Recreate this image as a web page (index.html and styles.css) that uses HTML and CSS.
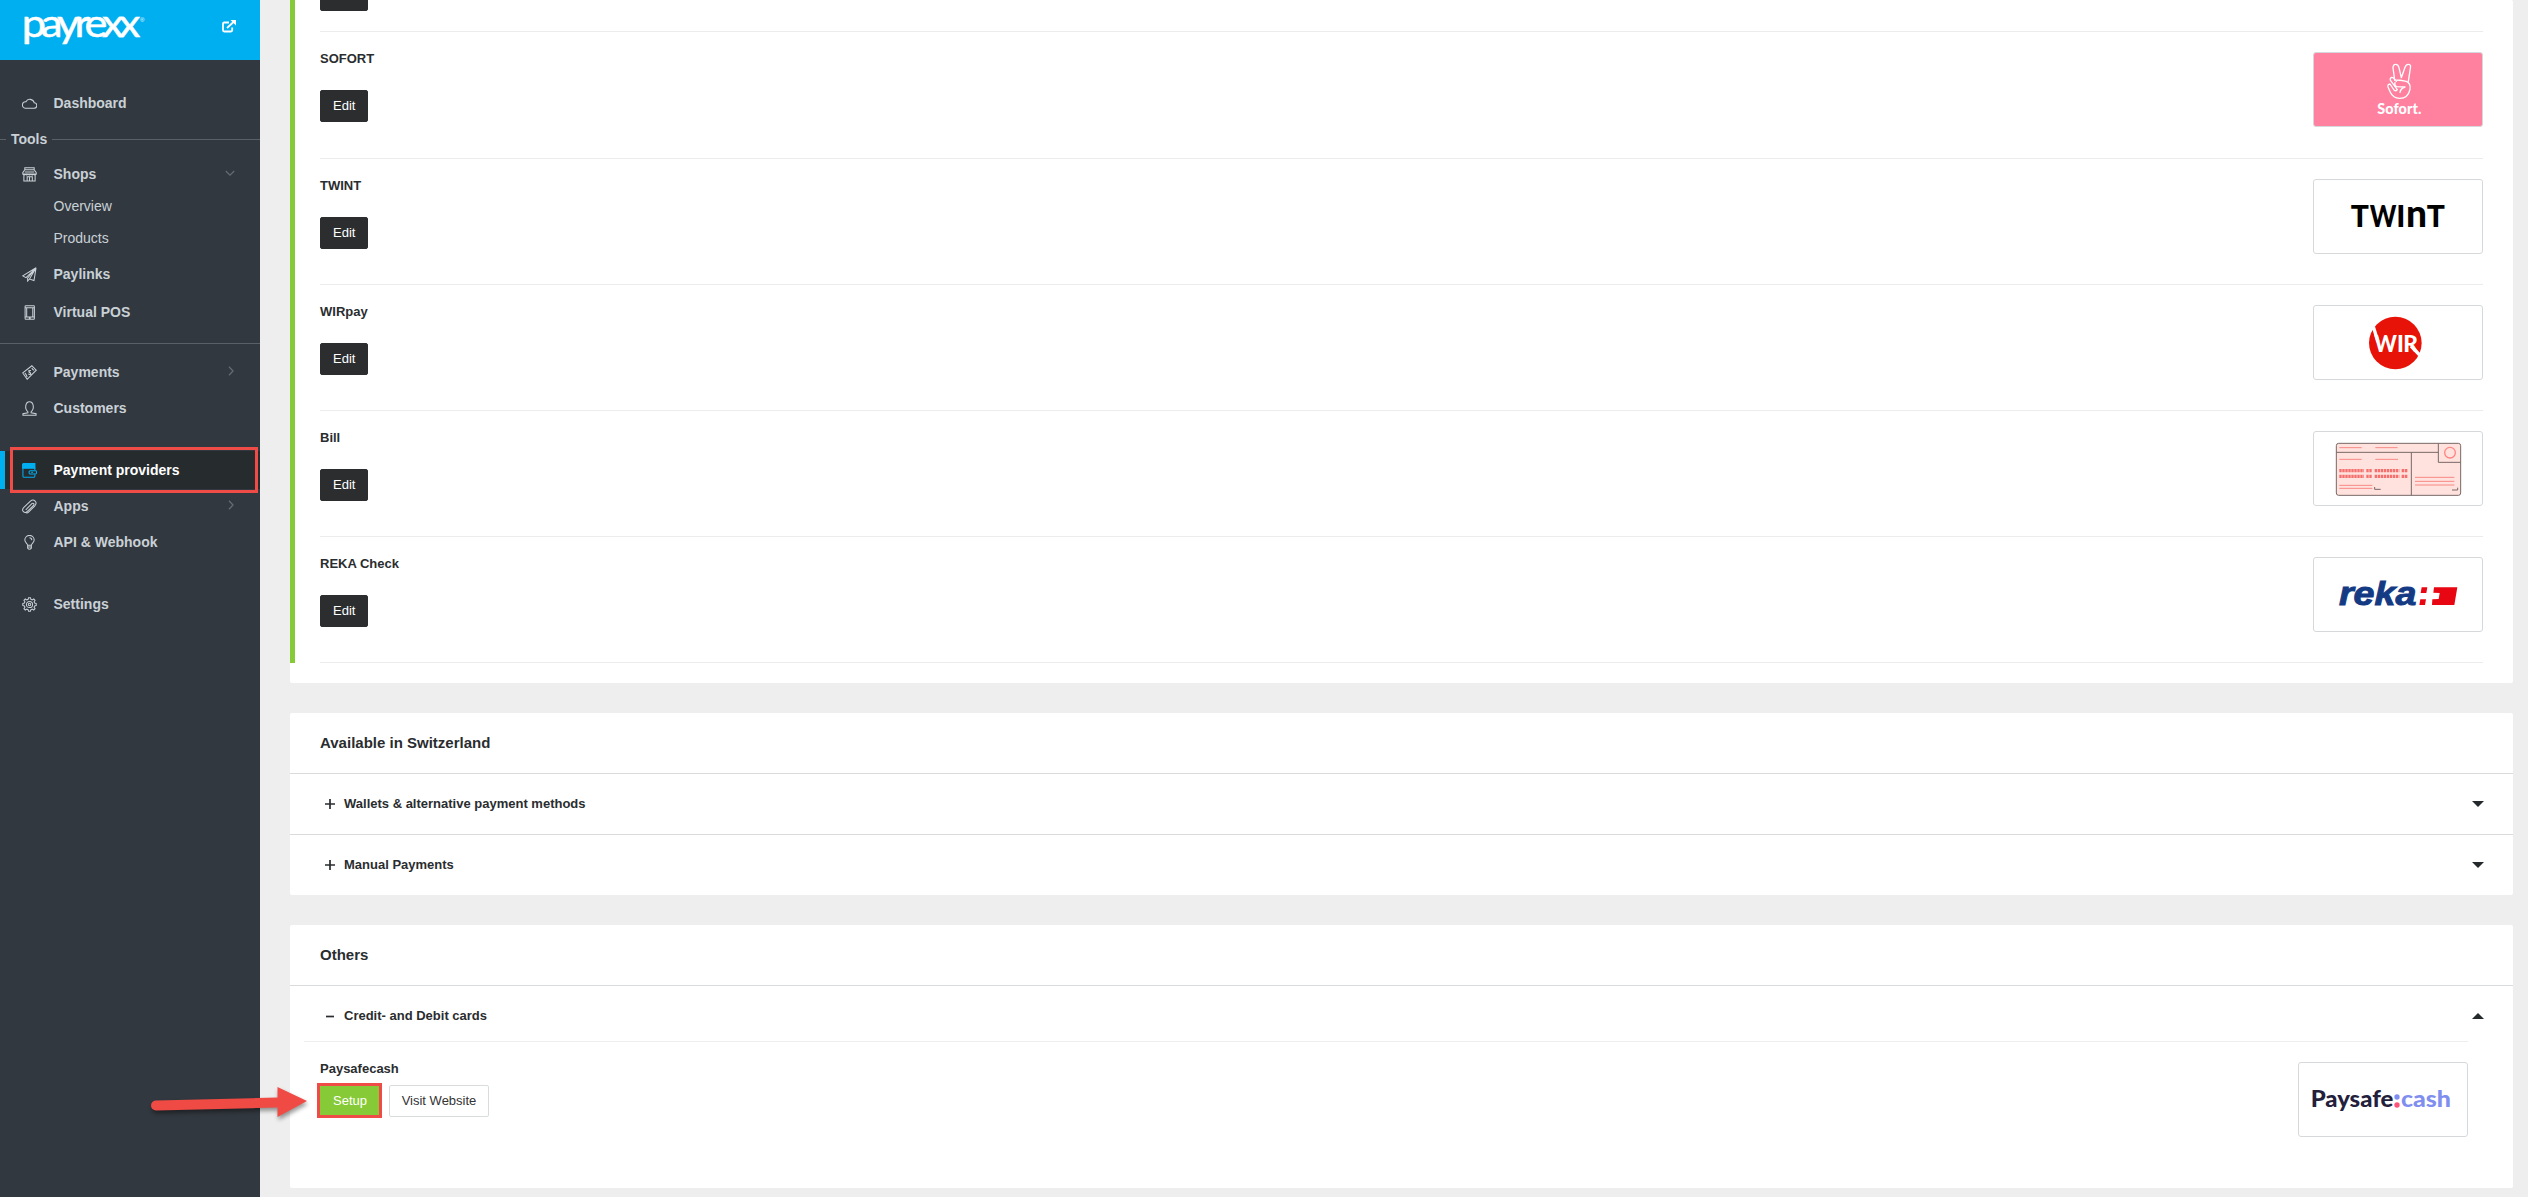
FILE: index.html
```html
<!DOCTYPE html>
<html lang="en">
  <head>
    <meta charset="UTF-8" />
    <meta name="viewport" content="width=device-width, initial-scale=1.0" />
    <title>Payrexx - Payment providers</title>
    <link rel="stylesheet" href="styles.css">
  </head>
  <body>
    <aside class="sidebar">
      <div class="brand">
        <svg class="logo" width="124" height="34" viewBox="0 0 124 34">
          <text class="logo-text" transform="scale(1.14 1)" x="-2" y="25" textLength="104">payrexx</text>
          <text class="logo-mark" x="116" y="10">®</text>
        </svg>
        <svg class="external" width="14" height="13" viewBox="0 0 14 13">
          <path d="M7 2.5H2.2Q1 2.500 1 3.700V10.300Q1 11.500 2.200 11.500H9Q10.200 11.500 10.200 10.300V7.500" />
          <path d="M5 8L11.500 2" />
          <path class="solid" d="M8.500 0H14V5.500Z" />
        </svg>
      </div>

      <nav>
        <a class="item"><svg viewBox="0 0 16 16"><path d="M3.500 13H12.800A2.900 2.900 0 0 0 13 7.200A4.700 4.700 0 0 0 4.200 6.200A3.400 3.400 0 0 0 3.500 13Z" /></svg>Dashboard</a>
        <div class="group"><span>Tools</span></div>
        <a class="item shops"><svg viewBox="0 0 16 16"><path d="M3 .8H13V3H3ZM3 3L.8 6V7.500H15.200V6L13 3M1 7.500Q2.200 9.500 3.700 7.700Q5 9.500 6.400 7.700Q8 9.500 9.500 7.700Q11 9.500 12.400 7.700Q14 9.500 15 7.500M2 9V15H14V9M5.500 15V10.500H8V15M8 10.500H11V15M3 5.300H13" /></svg>Shops
          <svg class="chevron" viewBox="0 0 10 10"><path d="M.8 3L5 7.200L9.200 3" /></svg></a>
        <a class="subitem">Overview</a>
        <a class="subitem">Products</a>
        <a class="item paylinks"><svg viewBox="0 0 16 16"><path d="M15 .8L.8 9.500L4.300 11.300L15 .8L6 12V15L8 12.800L12.800 14.500L15 .8L8 12.800" /></svg>Paylinks</a>
        <a class="item pos"><svg viewBox="0 0 16 16"><path d="M4 .8H12.500Q13.200 .8 13.200 1.600V14.400Q13.200 15.200 12.500 15.200H4Q3.300 15.200 3.300 14.400V1.600Q3.300 .8 4 .8ZM3.300 3H13.200M3.300 12.800H13.200M5 3V12.800M11.500 3V12.800M7.300 14H9.200" /></svg>Virtual POS</a>
        <a class="item payments"><svg viewBox="0 0 16 16"><path d="M.8 8.500L10.500 .8L15.200 5.500L5.500 15.200ZM3 8.500Q4.500 9.500 5.500 13M10.500 3Q11 5 13 5.700M9.500 6Q7.500 5.500 7.300 7Q7.500 8.200 8.800 8.200Q9.800 9 8.500 10Q7.500 10.300 6.700 9.300M7 5.500L9.700 10.700" /></svg>Payments
          <svg class="chevron" viewBox="0 0 10 10"><path d="M4 .8L8 5L4 9.200" /></svg></a>
        <a class="item"><svg viewBox="0 0 16 16"><path d="M6.300 11.500C2.500 8.500 3.500 .7 8 .7S13.500 8.500 9.700 11.500V12.500L15 13.500V15.200H1V13.500L6.300 12.500Z" /></svg>Customers</a>
        <a class="item active"><svg viewBox="0 0 16 16"><path d="M1 1.500V14Q1 15.200 2.200 15.200H12.500Q13.700 15.200 13.700 14V12.500M13.700 7.500V5M9 8.300H14.500Q15.500 8.300 15.500 10T14.500 11.800H9Q7.500 11.800 7.500 10T9 8.300ZM10 10H11.500" /><path class="fill" d="M1.500 .5H13.800V5.500H.6V1.400Z" /></svg>Payment providers</a>
        <a class="item"><svg viewBox="0 0 16 16"><path d="M5 10.500L10.500 5Q11.700 4 12.500 5T12 7L6 13Q3.500 15.500 1.500 13.500T2 9L9 2.300Q11.700 0 14 2.200T13.500 7.500L7 14Q5.500 15.500 4 14.500M4 11.500L10 5.500" /></svg>Apps
          <svg class="chevron" viewBox="0 0 10 10"><path d="M4 .8L8 5L4 9.200" /></svg></a>
        <a class="item"><svg viewBox="0 0 16 16"><path d="M6 11C6 9 3 8 3 5.400A4.800 4.800 0 0 1 13 5.400C13 8 10 9 10 11ZM6 11V14Q8 16.500 10 14V11M6 12.800H10M8 3Q10.300 3 10.500 5.500" /></svg>API &amp; Webhook</a>
        <a class="item settings"><svg viewBox="0 0 16 16"><path d="M6.500 2.500L7 .8H9L9.500 2.500L11 3.100L12.500 2.100L13.900 3.500L12.900 5L13.500 6.500L15.200 7V9L13.500 9.500L12.900 11L13.900 12.500L12.500 13.900L11 12.900L9.500 13.500L9 15.200H7L6.500 13.500L5 12.900L3.500 13.900L2.100 12.500L3.100 11L2.500 9.500L.8 9V7L2.500 6.500L3.100 5L2.100 3.500L3.500 2.100L5 3.100Z" /><circle cx="8" cy="8" r="3.300" /><circle cx="8" cy="8" r="1.300" /></svg>Settings</a>
      </nav>
    </aside>

    <main>
      <section class="card">
        <div class="active-list">
          <div class="method cut"><button class="btn dark"></button></div>
          <div class="method first">
            <div class="info"><h4>SOFORT</h4><button class="btn dark">Edit</button></div>
            <div class="picture sofort">
              <svg viewBox="3 3 504 219">
                <g class="hand">
                  <path d="M245 84L240 48Q240 37 248 37T258 47L265 77L276 46Q279 36 287 37T292 49L286 88" />
                  <path d="M245 84Q262 84 280 88Q294 94 291 112Q285 139 260 139Q240 139 232 121L225 105Q223 97 231 96L243 114Q249 119 253 113L233 86Q229 80 236 76Q241 75 250 88" />
                  <path d="M246 92Q243 101 251 104L276 105Q263 109 261 121" />
                </g>
                <text class="sofort-text" x="193" y="187" textLength="132">Sofort.</text>
              </svg>
            </div>
          </div>
          <div class="method">
            <div class="info"><h4>TWINT</h4><button class="btn dark">Edit</button></div>
            <div class="picture">
              <svg viewBox="3 3 504 219">
                <text class="twint" y="145"><tspan x="113">T</tspan><tspan x="170" textLength="80" lengthAdjust="spacingAndGlyphs">W</tspan><tspan x="250">I</tspan><tspan class="round" x="279">n</tspan><tspan x="341">T</tspan></text>
              </svg>
            </div>
          </div>
          <div class="method">
            <div class="info"><h4>WIRpay</h4><button class="btn dark">Edit</button></div>
            <div class="picture">
              <svg viewBox="3 3 504 219">
                <circle class="wir-circle" cx="247" cy="114" r="79" />
                <path class="wir-cut" d="M181 65L195 110M294 123L320 150" />
                <text class="wir-text" y="140"><tspan x="184" textLength="68" lengthAdjust="spacingAndGlyphs">W</tspan><tspan x="252">I</tspan><tspan x="271">R</tspan></text>
              </svg>
            </div>
          </div>
          <div class="method">
            <div class="info"><h4>Bill</h4><button class="btn dark">Edit</button></div>
            <div class="picture">
              <svg viewBox="3 3 504 219">
                <rect class="slip" x="70" y="37" width="373" height="156" rx="7" />
                <path class="slip-line" d="M70 64H376M376 37V94H443M295 64V193M185 168V175H203M434 170V177H417" />
                <path class="slip-red" d="M79 50H146M187 50H254M79 85H146M187 85H255M79 163H178M79 172H178M306 139H424M306 151H424M306 162H424" />
                <path class="slip-code" d="M79 119H153M160 119H178M185 119H259M266 119H285M79 136H153M160 136H178M185 136H259M266 136H285" />
                <circle class="slip-ring" cx="411" cy="65" r="16" />
              </svg>
            </div>
          </div>
          <div class="method">
            <div class="info"><h4>REKA Check</h4><button class="btn dark">Edit</button></div>
            <div class="picture">
              <svg viewBox="3 3 504 219">
                <text class="reka" x="78" y="143" textLength="232" lengthAdjust="spacingAndGlyphs">reka</text>
                <path class="reka-flag" d="M326 91H343L340 108H323ZM322 127H339L336 144H319ZM363 91H433L424 144H357L358 127L377 126L380 108L361 107Z" />
              </svg>
            </div>
          </div>
        </div>
      </section>

      <section class="card">
        <h3>Available in Switzerland</h3>
        <div class="toggle">
          <svg class="sign" viewBox="0 0 10 10"><path d="M0 5H10M5 0V10" /></svg>
          <span>Wallets &amp; alternative payment methods</span>
          <i class="caret"></i>
        </div>
        <div class="toggle">
          <svg class="sign" viewBox="0 0 10 10"><path d="M0 5H10M5 0V10" /></svg>
          <span>Manual Payments</span>
          <i class="caret"></i>
        </div>
      </section>

      <section class="card others">
        <h3>Others</h3>
        <div class="toggle">
          <svg class="sign" viewBox="0 0 10 10"><path d="M1 5.500H9" /></svg>
          <span>Credit- and Debit cards</span>
          <i class="caret up"></i>
        </div>
        <div class="provider">
          <div class="info">
            <h4>Paysafecash</h4>
            <div class="buttons">
              <button class="btn green">Setup</button>
              <button class="btn visit">Visit Website</button>
            </div>
          </div>
          <div class="picture">
            <svg viewBox="3 3 504 219">
              <text class="paysafe" x="38" y="136" textLength="248" lengthAdjust="spacingAndGlyphs">Paysafe</text>
              <text class="paysafe cash" x="309" y="136" textLength="150" lengthAdjust="spacingAndGlyphs">cash</text>
              <circle class="cash" cx="297" cy="105" r="8" />
              <circle class="pink-dot" cx="297" cy="129" r="8" />
            </svg>
          </div>
        </div>
      </section>
    </main>

    <!-- highlights over the page -->
    <div class="mark mark-menu"></div>
    <div class="mark mark-setup"></div>
    <svg class="arrow" width="170" height="50" viewBox="0 0 170 50">
      <path d="M11 19.500L132.500 16.500V6L162 20L132.500 36V26.500L11 29.500A5 5 0 0 1 11 19.500Z" />
    </svg>
  </body>
</html>
```

FILE: styles.css
```css
* {
  box-sizing: border-box;
}
body {
  margin: 0;
  height: 1197px;
  display: flex;
  overflow: hidden;
  position: relative;
  font-family: "Liberation Sans", Arial, sans-serif;
  font-size: 13px;
  color: #2a2d2f;
  background: #eeeeee;
}
h3,
h4 {
  margin: 0;
}

/* sidebar */
.sidebar {
  width: 260px;
  background: #32383f;
  flex-shrink: 0;
}
.brand {
  height: 60px;
  padding: 0 24px;
  background: #00aff0;
  display: flex;
  justify-content: space-between;
}
.logo {
  margin-top: 12px;
  overflow: visible;
}
.logo-text {
  font-family: Lato, sans-serif;
  font-size: 38px;
  fill: #fff;
  stroke: #fff;
  stroke-width: 0.5;
}
.logo-mark {
  font-size: 6px;
  fill: #fff;
}
.external {
  margin-top: 20px;
  fill: none;
  stroke: #fff;
  stroke-width: 1.8;
}
.external .solid {
  fill: #fff;
  stroke: none;
}
nav {
  padding-top: 25px;
  font-size: 14px;
  color: #c9d1d7;
}
.item {
  display: flex;
  align-items: center;
  height: 36px;
  padding: 0 25px 0 22px;
  font-weight: bold;
}
.item svg {
  width: 15px;
  height: 15px;
  margin-right: 16.5px;
  fill: none;
  stroke: #c9d1d7;
  stroke-width: 1.1;
}
.item .chevron {
  width: 10px;
  height: 10px;
  margin: -2px 0 0 auto;
  stroke: #646b72;
  stroke-width: 1.3;
}
.group {
  display: flex;
  align-items: center;
  height: 36px;
  font-weight: bold;
}
.group::before,
.group::after {
  content: "";
  height: 1px;
  width: 6px;
  background: #5a6066;
}
.group::after {
  flex: 1;
}
.group span {
  padding: 0 5px;
}
.shops {
  margin-top: 1px;
  height: 32px;
}
.subitem {
  display: flex;
  align-items: center;
  height: 32px;
  padding-left: 53.5px;
}
.paylinks {
  margin-top: 2px;
}
.pos {
  margin-top: 2px;
}
.payments {
  margin-top: 13px;
  border-top: 1px solid #5a6066;
  height: 47px;
  padding-top: 10px;
}
.active {
  height: 38px;
  margin: 25px 0 -1px;
  padding-left: 17px;
  border-left: 5px solid #00aff0;
  background: #262b2e;
  color: #fff;
}
.item.active svg {
  stroke: #00aff0;
}
.active .fill {
  fill: #00aff0;
}
.settings {
  margin-top: 26px;
}

/* content */
main {
  flex: 1;
  padding: 0 15px 0 30px;
}
.card {
  margin-bottom: 30px;
  padding-bottom: 20px;
  border-radius: 2px;
  background: #fff;
}
.active-list {
  border-left: 5px solid #87ca37;
  padding: 0 30px 0 25px;
}
.method {
  display: flex;
  justify-content: space-between;
  height: 126px;
  border-bottom: 1px solid #ececec;
}
.method.cut {
  height: 32px;
}
.cut .btn {
  margin-top: -21px;
}
.method.first {
  height: 127px;
}
.method h4 {
  padding-top: 19px;
  margin-bottom: 24px;
}
h4 {
  font-size: 13px;
  line-height: 15px;
}
.btn {
  height: 32px;
  padding: 0 12px;
  border: 1px solid #d9dcdd;
  border-radius: 2px;
  background: #fff;
  color: #333;
  font: 13px/28px "Liberation Sans", Arial, sans-serif;
}
.dark {
  width: 48px;
  border-color: #2b2d2e;
  background: #2b2d2e;
  color: #fff;
}
.green {
  width: 60px;
  border-color: #87ca37;
  background: #87ca37;
  color: #fff;
}
.visit {
  width: 100px;
  padding: 0;
}
.picture {
  width: 170px;
  height: 75px;
  margin-top: 20px;
  border: 1px solid #d6d9db;
  border-radius: 3px;
  overflow: hidden;
}
.picture svg {
  display: block;
  width: 168px;
  height: 73px;
}
.card h3 {
  height: 60px;
  padding-left: 30px;
  font-size: 15px;
  line-height: 60px;
}
.toggle {
  display: flex;
  align-items: center;
  height: 61px;
  padding: 0 29px 2px 35px;
  border-top: 1px solid #d9dbdd;
  font-weight: bold;
}
.card:has(.toggle) {
  padding-bottom: 0;
}
.sign {
  width: 10px;
  height: 10px;
  margin: 2px 9px 0 0;
  stroke: #2a2d2f;
  stroke-width: 1.7;
}
.caret {
  margin: 2px 0 0 auto;
  border: 6px solid transparent;
  border-top-color: #24292c;
  border-bottom: 0;
}
.caret.up {
  border-top: 0;
  border-bottom: 6px solid #24292c;
}
.others {
  height: 263px;
}
.others .toggle {
  height: 56px;
  padding-top: 5px;
}
.provider {
  display: flex;
  justify-content: space-between;
  margin: 0 45px 0 14px;
  padding-left: 16px;
  border-top: 1px solid #eeeeee;
}
.provider h4 {
  padding-top: 19px;
  margin-bottom: 9px;
}
.buttons {
  display: flex;
  gap: 9px;
}

/* logos */
.sofort {
  background: #ff809f;
}
.hand {
  fill: none;
  stroke: #fff;
  stroke-width: 4;
  stroke-linejoin: round;
  stroke-linecap: round;
}
.sofort-text {
  font: 900 43px Lato, sans-serif;
  fill: #fff;
}
.twint {
  font: 900 90px Lato, sans-serif;
}
.twint .round {
  font-size: 111px;
}
.wir-circle {
  fill: #e81308;
}
.wir-cut {
  stroke: #fff;
  stroke-width: 10;
}
.wir-text {
  font: 900 68px Lato, sans-serif;
  fill: #fff;
}
.slip {
  fill: #ffe2de;
  stroke: #786865;
  stroke-width: 3;
}
.slip-line {
  fill: none;
  stroke: #786865;
  stroke-width: 3;
}
.slip-red {
  stroke: #f78884;
  stroke-width: 3;
}
.slip-code {
  stroke: #f56f6c;
  stroke-width: 10;
  stroke-dasharray: 7 2;
}
.slip-ring {
  fill: none;
  stroke: #ff8583;
  stroke-width: 4;
}
.reka {
  font: italic bold 101px "Liberation Sans", Arial, sans-serif;
  fill: #143a84;
  stroke: #143a84;
  stroke-width: 3;
}
.reka-flag {
  fill: #e90613;
}
.paysafe {
  font: 900 68px Lato, sans-serif;
  fill: #241f3d;
}
.cash {
  fill: #808eef;
}
.pink-dot {
  fill: #ff5479;
}

/* highlights */
.mark {
  position: absolute;
  border: 3px solid #f04c47;
}
.mark-menu {
  left: 10px;
  top: 447px;
  width: 248px;
  height: 46px;
}
.mark-setup {
  left: 317px;
  top: 1083px;
  width: 65px;
  height: 35px;
}
.arrow {
  position: absolute;
  left: 145px;
  top: 1081px;
  fill: #ef4b44;
  filter: drop-shadow(1px 3px 2px rgba(0, 0, 0, 0.4));
}
```
